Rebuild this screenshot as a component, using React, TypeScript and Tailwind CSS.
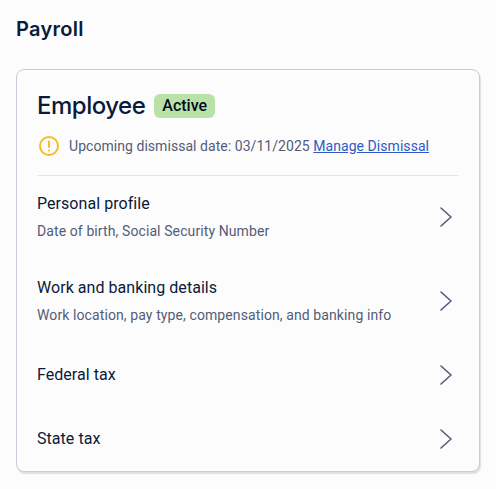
import React from "react";

const Chevron = () => (
  <svg width="24" height="24" viewBox="0 0 24 24" fill="none" stroke="#525c7a" strokeWidth="1.6" strokeLinecap="round" strokeLinejoin="round" className="shrink-0">
    <path d="M7 3l10 9-10 9" />
  </svg>
);

const Row = ({ title, sub }: { title: string; sub?: string }) => (
  <div className="flex items-center justify-between pr-[1px]">
    <div>
      <div className="text-[16px] leading-[24px] text-[#0a1a3a] tracking-[0.05px]">{title}</div>
      {sub && <div className="text-[14px] leading-[20px] mt-[5px] text-[#525c7a] tracking-[0.1px]">{sub}</div>}
    </div>
    <Chevron />
  </div>
);

export default function App() {
  return (
    <div className="w-[496px] h-[489px] bg-[#fdfcfc] px-4 pt-[15px] font-['Roboto',sans-serif]">
      <h1 className="text-[20px] leading-[28px] font-semibold text-[#0a1a3a] font-['Inter',sans-serif] tracking-[0.3px]">Payroll</h1>
      <div className="mt-[26px] h-[403px] rounded-[8px] border border-[#c9cbdc] bg-[#fdfcfc] px-5 pt-[20px] shadow-[1px_2px_1px_rgba(60,60,90,0.15)]">
        <div className="flex items-center gap-[9px]">
          <span className="text-[24px] leading-[32px] font-medium text-[#0a1a3a] font-['Inter',sans-serif] tracking-[-0.5px]">Employee</span>
          <span className="rounded-[6px] bg-[#b9e2a8] px-2 text-[16px] leading-[24px] font-medium text-[#050a1a]">Active</span>
        </div>
        <div className="mt-[12px] flex items-center gap-[8px] border-b border-[#e4e4ef] pb-[17px] text-[14px] leading-[24px] text-[#525c7a] tracking-[0.05px]">
          <svg width="24" height="24" viewBox="0 0 24 24" fill="none" stroke="#f5bd24" strokeWidth="2" strokeLinecap="round" className="shrink-0">
            <circle cx="12" cy="12" r="9" />
            <path d="M12 7.5v5.5M12 16.5v.1" />
          </svg>
          <span>Upcoming dismissal date: 03/11/2025 <a className="text-[#2d5bc5] underline">Manage Dismissal</a></span>
        </div>
        <div className="flex flex-col">
          <div className="pt-[16px]"><Row title="Personal profile" sub="Date of birth, Social Security Number" /></div>
          <div className="pt-[35px]"><Row title="Work and banking details" sub="Work location, pay type, compensation, and banking info" /></div>
          <div className="pt-[38px]"><Row title="Federal tax" /></div>
          <div className="pt-[40px]"><Row title="State tax" /></div>
        </div>
      </div>
    </div>
  );
}
